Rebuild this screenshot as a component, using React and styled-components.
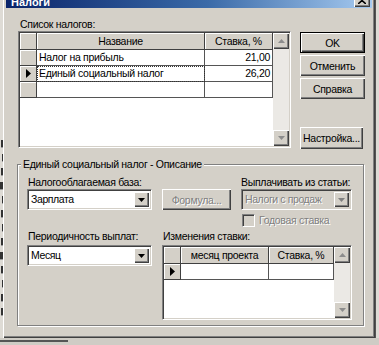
import styled, { createGlobalStyle } from "styled-components"

const GlobalStyle = createGlobalStyle`
  html, body {
    margin: 0;
    padding: 0;
  }
  body {
    background: #d4d0c8;
    font-family: "Liberation Sans", Arial, sans-serif;
    font-size: 10.5px;
    letter-spacing: -0.3px;
    color: #000;
  }
`

const face = "#d4d0c8"
const raised = "inset 1px 1px #fff, inset -1px -1px #404040, inset -2px -2px #808080"
const sunken = "inset 1px 1px #404040, inset -1px -1px " + face

const Screen = styled.div`
  width: 379px;
  height: 345px;
  overflow: hidden;
  display: flex;
  flex-direction: column;
  background: #cfccc5;
`

const Desk = styled.div`
  display: flex;
  height: 338px;
  flex: none;
`

const BackStrip = styled.div`
  width: ${p => p.$w}px;
  flex: none;
  overflow: hidden;
  background: #dedbd5;
  display: flex;
  flex-direction: column;
  gap: 6px;
  padding-top: ${p => p.$top || 0}px;
  border-left: ${p => p.$edge ? "1px solid #555" : "none"};
`

const BackMark = styled.div`
  height: 7px;
  width: ${p => p.$w}px;
  align-self: flex-end;
  background: #333;
  border-bottom: 1px solid #9a9a9a;
`

const BottomStrip = styled.div`
  flex: 1;
  padding-top: 2px;
`

const TaskLine = styled.div`
  width: 68px;
  height: 2px;
  background: #555;
`

const Dialog = styled.div`
  width: 372px;
  flex: none;
  box-sizing: border-box;
  display: flex;
  flex-direction: column;
  padding: 0 3px 3px 3px;
  background: ${face};
  box-shadow: inset 1px 0 #fff, inset -1px -1px #404040, inset -2px -2px #808080;
`

const TitleBar = styled.div`
  height: 8px;
  flex: none;
  overflow: hidden;
  display: flex;
  align-items: flex-end;
  justify-content: space-between;
  padding: 0 2px 0 5px;
  background: linear-gradient(90deg, #0a246a 0%, #3a6aa8 55%, #a6caf0 100%);
`

const TitleText = styled.span`
  color: #fff;
  font-weight: bold;
  font-size: 11px;
  letter-spacing: 0;
  line-height: 12px;
  flex: none;
`

const CaptionButton = styled.div`
  width: 16px;
  height: 14px;
  flex: none;
  margin-bottom: 1px;
  background: ${face};
  box-shadow: ${raised};
  display: flex;
  align-items: center;
  justify-content: center;
`

const Body = styled.div`
  flex: 1;
  display: flex;
  flex-direction: column;
  padding: 9px 0 0 11px;
`

const TopRow = styled.div`
  display: flex;
  gap: 9px;
  padding-left: 1px;
`

const ListColumn = styled.div`
  display: flex;
  flex-direction: column;
`

const Caption = styled.div`
  height: ${p => p.$h || 14}px;
  line-height: ${p => p.$h || 14}px;
  padding-left: ${p => p.$pad ?? 2}px;
  white-space: nowrap;
  align-self: ${p => p.$align || "auto"};
`

const ButtonColumn = styled.div`
  width: 65px;
  display: flex;
  flex-direction: column;
  gap: 2px;
  padding-top: 15px;
`

const Button = styled.button`
  font: inherit;
  letter-spacing: inherit;
  width: ${p => p.$w ? p.$w + "px" : "100%"};
  height: ${p => p.$h || 21}px;
  margin-top: ${p => p.$mt || 0}px;
  padding: 0;
  box-sizing: border-box;
  background: ${face};
  border: ${p => p.$default ? "1px solid #000" : "none"};
  box-shadow: ${raised};
  color: ${p => p.disabled ? "#808080" : "#000"};
  text-shadow: ${p => p.disabled ? "1px 1px #fff" : "none"};
  white-space: nowrap;
  align-self: start;
`

const GridFrame = styled.div`
  width: ${p => p.$w}px;
  height: ${p => p.$h}px;
  box-sizing: border-box;
  border: 1px solid;
  border-color: #808080 #fff #fff #808080;
  box-shadow: ${sunken};
  padding: 1px;
  background: #fff;
  display: flex;
  grid-column: ${p => p.$span || "auto"};
`

const GridBody = styled.div`
  flex: 1;
  display: grid;
  grid-template-columns: ${p => p.$cols};
  grid-template-rows: 17px;
  grid-auto-rows: 16px;
  align-content: start;
`

const HeaderCell = styled.div`
  background: ${face};
  box-shadow: inset 1px 1px #fff;
  border-right: 1px solid #404040;
  border-bottom: 1px solid #404040;
  display: flex;
  align-items: center;
  justify-content: center;
  white-space: nowrap;
  overflow: hidden;
`

const Cell = styled.div`
  border-right: 1px solid #555;
  border-bottom: 1px solid #555;
  padding: 0 2px;
  line-height: 15px;
  text-align: ${p => p.$align || "left"};
  white-space: nowrap;
  overflow: hidden;
  outline: ${p => p.$focus ? "1px dotted #333" : "none"};
  outline-offset: -1px;
`

const ScrollBar = styled.div`
  width: 16px;
  flex: none;
  display: flex;
  flex-direction: column;
  justify-content: space-between;
  background: #ebe9e5;
`

const ScrollArrow = styled.div`
  height: 16px;
  background: ${face};
  box-shadow: ${raised};
  display: flex;
  align-items: center;
  justify-content: center;
`

const GroupBox = styled.div`
  position: relative;
  margin-top: 15px;
  width: 347px;
  box-sizing: border-box;
  border: 1px solid #808080;
  box-shadow: inset 1px 1px #fff, 1px 1px #fff;
  padding: 11px 11px 5px 9px;
  display: grid;
  grid-template-columns: 125px 69px 111px;
  grid-template-rows: 13px 21px 17px 18px 75px;
  column-gap: 10px;
`

const Legend = styled.span`
  position: absolute;
  top: -7px;
  left: 3px;
  padding: 0 2px;
  line-height: 13px;
  background: ${face};
  white-space: nowrap;
`

const Combo = styled.div`
  width: ${p => p.$w}px;
  height: 21px;
  box-sizing: border-box;
  border: 1px solid;
  border-color: #808080 #fff #fff #808080;
  box-shadow: ${sunken};
  padding: 2px;
  background: ${p => p.$disabled ? face : "#fff"};
  display: flex;
  align-self: start;
`

const ComboText = styled.div`
  flex: 1;
  min-width: 0;
  padding-left: 1px;
  line-height: 15px;
  letter-spacing: -0.4px;
  white-space: nowrap;
  overflow: hidden;
  color: ${p => p.$disabled ? "#808080" : "#000"};
  text-shadow: ${p => p.$disabled ? "1px 1px #fff" : "none"};
`

const ComboButton = styled.div`
  width: 15px;
  flex: none;
  background: ${face};
  box-shadow: ${raised};
  display: flex;
  align-items: center;
  justify-content: center;
`

const CheckRow = styled.div`
  grid-column: 3;
  align-self: end;
  display: flex;
  align-items: center;
  gap: 4px;
  padding-left: 1px;
  color: #808080;
  text-shadow: 1px 1px #fff;
  line-height: 13px;
`

const CheckBox = styled.span`
  width: 13px;
  height: 13px;
  box-sizing: border-box;
  border: 1px solid;
  border-color: #808080 #fff #fff #808080;
  box-shadow: ${sunken};
  background: ${face};
  flex: none;
`

function Arrow({ dir, color = "#000" }) {
  const pts = {
    down: "0,0 7,0 3.5,4",
    up: "0,4 7,4 3.5,0",
  }
  return (
    <svg width="7" height="4" viewBox="0 0 7 4">
      <polygon points={pts[dir]} fill={color} />
    </svg>
  )
}

function RowPointer() {
  return (
    <svg width="5" height="9" viewBox="0 0 5 9">
      <polygon points="0,0 5,4.5 0,9" fill="#000" />
    </svg>
  )
}

function DataGrid({ w, h, cols, headers, rows, span }) {
  return (
    <GridFrame $w={w} $h={h} $span={span}>
      <GridBody $cols={cols}>
        <HeaderCell />
        {headers.map(t => <HeaderCell key={t}>{t}</HeaderCell>)}
        {rows.map((r, i) => [
          <HeaderCell key={"i" + i}>{r.current && <RowPointer />}</HeaderCell>,
          ...r.cells.map((c, j) => (
            <Cell key={i + "-" + j} $align={j === 1 ? "right" : "left"} $focus={r.current && j === 0 && c}>
              {c}
            </Cell>
          )),
        ])}
      </GridBody>
      <ScrollBar>
        <ScrollArrow><Arrow dir="up" color="#8c8c8c" /></ScrollArrow>
        <ScrollArrow><Arrow dir="down" color="#8c8c8c" /></ScrollArrow>
      </ScrollBar>
    </GridFrame>
  )
}

const taxes = [
  { cells: ["Налог на прибыль", "21,00"] },
  { cells: ["Единый социальный налог", "26,20"], current: true },
  { cells: ["", ""] },
]

// bits of the window lying behind the dialog
const backMarks = [2, 1, 2, 3, 1, 2, 1, 2, 3, 2, 1, 2, 2]

export default function App() {
  return (
    <>
      <GlobalStyle />
      <Screen>
        <Desk>
          <BackStrip $w={3} $top={140}>
            {backMarks.map((w, i) => <BackMark key={i} $w={w} />)}
          </BackStrip>
          <Dialog>
            <TitleBar>
              <TitleText>Налоги</TitleText>
              <CaptionButton>
                <svg width="8" height="7" viewBox="0 0 8 7">
                  <path d="M0 0 L8 7 M8 0 L0 7" stroke="#000" strokeWidth="1.6" />
                </svg>
              </CaptionButton>
            </TitleBar>
            <Body>
              <TopRow>
                <ListColumn>
                  <Caption>Список налогов:</Caption>
                  <DataGrid
                    w={273}
                    h={117}
                    cols="17px 168px 68px"
                    headers={["Название", "Ставка, %"]}
                    rows={taxes}
                  />
                </ListColumn>
                <ButtonColumn>
                  <Button $default>OK</Button>
                  <Button>Отменить</Button>
                  <Button>Справка</Button>
                  <Button $mt={26} $h={22} $w={63}>Настройка...</Button>
                </ButtonColumn>
              </TopRow>
              <GroupBox>
                <Legend>Единый социальный налог - Описание</Legend>
                <Caption $h={13} $pad={1}>Налогооблагаемая база:</Caption>
                <span />
                <Caption $h={13} $pad={0}>Выплачивать из статьи:</Caption>

                <Combo $w={125}>
                  <ComboText>Зарплата</ComboText>
                  <ComboButton><Arrow dir="down" /></ComboButton>
                </Combo>
                <Button disabled>Формула...</Button>
                <Combo $w={111} $disabled>
                  <ComboText $disabled>Налоги с продаж</ComboText>
                  <ComboButton><Arrow dir="down" color="#808080" /></ComboButton>
                </Combo>

                <CheckRow>
                  <CheckBox />
                  Годовая ставка
                </CheckRow>

                <Caption $h={13} $pad={1} $align="center">Периодичность выплат:</Caption>
                <Caption $h={13} $pad={1} $align="center">Изменения ставки:</Caption>
                <span />

                <Combo $w={125}>
                  <ComboText>Месяц</ComboText>
                  <ComboButton><Arrow dir="down" /></ComboButton>
                </Combo>
                <DataGrid
                  w={190}
                  h={75}
                  span="2 / 4"
                  cols="17px 88px 65px"
                  headers={["месяц проекта", "Ставка, %"]}
                  rows={[{ cells: ["", ""], current: true }]}
                />
              </GroupBox>
            </Body>
          </Dialog>
          <BackStrip $w={4} $edge />
        </Desk>
        <BottomStrip>
          <TaskLine />
        </BottomStrip>
      </Screen>
    </>
  )
}
